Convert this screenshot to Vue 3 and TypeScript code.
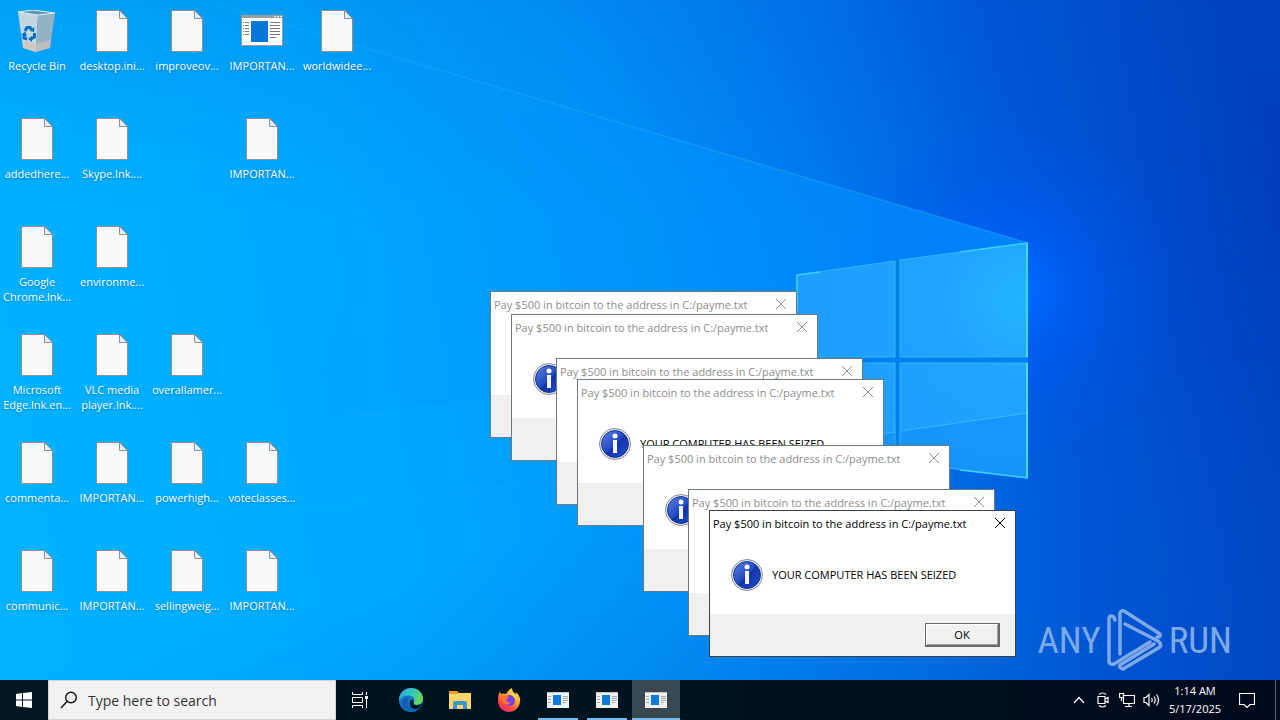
<script setup lang="ts">
import { ref } from 'vue'

type IconKind = 'bin' | 'file' | 'app'
interface DesktopIcon { label: string; kind: IconKind; col: number; row: number }
interface Dialog { id: number; x: number; y: number }

const file = (label: string, col: number, row: number): DesktopIcon => ({ label, kind: 'file', col, row })

const icons: DesktopIcon[] = [
  { label: 'Recycle Bin', kind: 'bin', col: 1, row: 1 },
  file('desktop.ini...', 2, 1),
  file('improveov...', 3, 1),
  { label: 'IMPORTAN...', kind: 'app', col: 4, row: 1 },
  file('worldwidee...', 5, 1),
  file('addedhere...', 1, 2),
  file('Skype.lnk....', 2, 2),
  file('IMPORTAN...', 4, 2),
  file('Google\nChrome.lnk...', 1, 3),
  file('environme...', 2, 3),
  file('Microsoft\nEdge.lnk.en...', 1, 4),
  file('VLC media\nplayer.lnk....', 2, 4),
  file('overallamer...', 3, 4),
  file('commenta...', 1, 5),
  file('IMPORTAN...', 2, 5),
  file('powerhigh...', 3, 5),
  file('voteclasses...', 4, 5),
  file('communic...', 1, 6),
  file('IMPORTAN...', 2, 6),
  file('sellingweig...', 3, 6),
  file('IMPORTAN...', 4, 6),
]

const dialogs = ref<Dialog[]>([
  { id: 1, x: 490, y: 291 },
  { id: 2, x: 511, y: 314 },
  { id: 3, x: 556, y: 358 },
  { id: 4, x: 577, y: 379 },
  { id: 5, x: 643, y: 445 },
  { id: 6, x: 688, y: 489 },
  { id: 7, x: 709, y: 510 },
])
const search = ref('')
const close = (id: number) => {
  dialogs.value = dialogs.value.filter((d) => d.id !== id)
}
</script>

<template>
  <div class="screen">
    <svg class="wallpaper" viewBox="0 0 1280 720" preserveAspectRatio="xMidYMid slice" aria-hidden="true">
      <defs>
        <linearGradient id="base" gradientUnits="userSpaceOnUse" x1="0" y1="420" x2="1280" y2="180">
          <stop offset="0" stop-color="#00b2ff" />
          <stop offset=".28" stop-color="#00a9ff" />
          <stop offset=".5" stop-color="#0094fb" />
          <stop offset=".66" stop-color="#0078ee" />
          <stop offset=".8" stop-color="#0059da" />
          <stop offset="1" stop-color="#003dbd" />
        </linearGradient>
        <linearGradient id="topShade" x1="0" y1="0" x2="0" y2="1">
          <stop offset="0" stop-color="#004fc0" stop-opacity=".16" />
          <stop offset="1" stop-color="#004fc0" stop-opacity="0" />
        </linearGradient>
        <linearGradient id="bottomShade" x1="0" y1="0" x2="1" y2="1">
          <stop offset=".45" stop-color="#0058c8" stop-opacity="0" />
          <stop offset="1" stop-color="#0048c0" stop-opacity=".45" />
        </linearGradient>
        <radialGradient id="glow" gradientUnits="userSpaceOnUse" cx="1010" cy="290" r="170">
          <stop offset="0" stop-color="#0074ff" stop-opacity="1" />
          <stop offset=".35" stop-color="#0060ff" stop-opacity=".55" />
          <stop offset="1" stop-color="#0050f0" stop-opacity="0" />
        </radialGradient>
        <linearGradient id="beam" gradientUnits="userSpaceOnUse" x1="200" y1="0" x2="1028" y2="243">
          <stop offset="0" stop-color="#0098ff" stop-opacity="0" />
          <stop offset=".6" stop-color="#0096ff" stop-opacity=".4" />
          <stop offset="1" stop-color="#008cff" stop-opacity=".8" />
        </linearGradient>
        <linearGradient id="edge" gradientUnits="userSpaceOnUse" x1="200" y1="0" x2="1028" y2="243">
          <stop offset="0" stop-color="#3cbcff" stop-opacity=".15" />
          <stop offset="1" stop-color="#3cb0ff" stop-opacity=".4" />
        </linearGradient>
        <radialGradient id="pane" gradientUnits="userSpaceOnUse" cx="1020" cy="300" r="200">
          <stop offset="0" stop-color="#22b4ff" />
          <stop offset=".4" stop-color="#20a4ff" />
          <stop offset="1" stop-color="#1e9eff" />
        </radialGradient>
      </defs>
      <rect width="1280" height="720" fill="url(#base)" />
      <rect width="1280" height="220" fill="url(#topShade)" />
      <rect y="360" width="1280" height="360" fill="url(#bottomShade)" />
      <rect x="800" y="80" width="440" height="420" fill="url(#glow)" />
      <path d="M200 0L1028 243V300L797 360L300 420Z" fill="url(#beam)" />
      <path d="M215 4L1028 243" stroke="url(#edge)" stroke-width="1.5" />
      <path d="M200 522L797 452" stroke="#5cc8ff" stroke-opacity=".12" />
      <path d="M797 275L1028 243V478L797 448Z" fill="#0080ec" />
      <g fill="url(#pane)">
        <path d="M797 275L895 261V357H797Z" />
        <path d="M900 260L1028 243V357H900Z" />
        <path d="M797 363H895V461L797 448Z" />
        <path d="M900 363H1028V478L900 462Z" />
      </g>
      <path d="M797 445L895 432V461L797 448ZM900 431L1028 413V478L900 462Z" fill="#0a82ee" fill-opacity=".35" />
      <path d="M797 445L895 432M900 431L1028 413" stroke="#36b8ff" />
      <path d="M797 357V275L895 261V357ZM900 357V260L1028 243M900 357H1028M797 363H895V461M900 462V363H1028M900 462L1028 478" fill="none" stroke="#35b4ff" />
      <path d="M1027 244V357M1027 363V478" stroke="#41dcff" stroke-width="2" />
      <path d="M797 275L820 272M797 275V310M960 252L1028 243M960 470L1028 478" stroke="#3ad0ff" fill="none" stroke-width="1.5" />
    </svg>

    <main class="desktop">
      <div class="icon-grid">
        <button
          v-for="(icon, i) in icons"
          :key="i"
          class="desktop-icon"
          :style="{ gridColumn: icon.col, gridRow: icon.row }"
        >
          <svg v-if="icon.kind === 'file'" width="32" height="42" viewBox="0 0 32 42" aria-hidden="true">
            <path d="M.5.5H24L31.500 8.500V41.500H.5Z" fill="#f8f9fa" stroke="#8f8e90" />
            <path d="M23.500 .5V8.500H31.500Z" fill="#dfeefa" stroke="#8f8e90" />
          </svg>
          <svg v-else-if="icon.kind === 'app'" width="42" height="42" viewBox="0 0 42 42" aria-hidden="true">
            <rect x=".5" y="5.500" width="41" height="30" fill="#fff" stroke="#9a9a9c" />
            <rect x="0" y="5" width="42" height="3" fill="#9a9c9f" />
            <path d="M33 6.500h2M36 6.500h2M39 6.500h2" stroke="#e8e8e8" />
            <rect x="10" y="11" width="17" height="21" fill="#0877d8" />
            <path d="M2 12.500h6M2 15.500h6M2 18.500h6M2 21.500h6M2 24.500h6M29 12.500h10M29 15.500h10M29 18.500h10M29 21.500h10M29 24.500h10M29 27.500h6" stroke="#777b80" />
            <path d="M3.500 12v14" stroke="#fff" />
          </svg>
          <svg v-else width="42" height="42" viewBox="0 0 42 42" aria-hidden="true">
            <path d="M2 2L22 5L20 42L7 38Z" fill="#c3d5de" />
            <path d="M22 5L39 3L34 38L20 42Z" fill="#93b2c3" />
            <path d="M6 31L20 34L35 30L34 38L20 42L7 38Z" fill="#d6c1b8" fill-opacity=".65" />
            <path d="M2 2L17 0L39 3L22 5Z" fill="#5e97b8" stroke="#e0f1f9" />
            <g fill="none" stroke="#0a70c4" stroke-width="3">
              <path d="M9 21L11 17.500H14L16 20" />
              <path d="M18.500 23V27L15 29" />
              <path d="M11 29L8 28V25" />
            </g>
            <path d="M14 21L18 22L18.500 17ZM16 26V32L12 29ZM5 25L9 21.500L11 26Z" fill="#0a70c4" />
          </svg>
          <span class="icon-label">{{ icon.label }}</span>
        </button>
      </div>

      <div class="watermark" role="img" aria-label="ANY RUN">
        <span>ANY</span>
        <svg width="58" height="64" viewBox="0 0 58 64" fill="none" stroke="#7fa9e6" stroke-width="3.500" stroke-linejoin="round" stroke-linecap="round" aria-hidden="true">
          <path d="M9 12Q8 8 5 8Q3 8 3 12V54Q4 57 8 56L44 34" />
          <path d="M14 46V5Q15 2 18 3L54 26Q55 29 51 29" />
          <path d="M19 16L52 33Q56 36 54 39L17 61Q13 60 14 57L48 36" />
        </svg>
        <span>RUN</span>
      </div>

      <section
        v-for="(d, i) in dialogs"
        :key="d.id"
        class="dialog"
        :class="{ active: i === dialogs.length - 1 }"
        :style="{ left: d.x + 'px', top: d.y + 'px' }"
        role="dialog"
      >
        <header class="dialog-title">
          <span>Pay $500 in bitcoin to the address in C:/payme.txt</span>
          <button class="dialog-close" aria-label="Close" @click="close(d.id)">
            <svg width="12" height="12" viewBox="0 0 12 12" aria-hidden="true">
              <path d="M1 1L11 11M11 1L1 11" stroke="currentColor" />
            </svg>
          </button>
        </header>
        <div class="dialog-body">
          <svg width="32" height="32" viewBox="0 0 32 32" aria-hidden="true">
            <defs>
              <linearGradient :id="'info' + d.id" x1="0" y1="0" x2="1" y2="1">
                <stop offset="0" stop-color="#5f86e0" />
                <stop offset=".5" stop-color="#2048c4" />
                <stop offset=".52" stop-color="#1233a8" />
                <stop offset="1" stop-color="#2450d0" />
              </linearGradient>
            </defs>
            <circle cx="16" cy="16" r="15.500" fill="#eef0f4" stroke="#858b98" />
            <circle cx="16" cy="16" r="13.500" :fill="`url(#info${d.id})`" stroke="#1a3590" />
            <circle cx="16" cy="8" r="2.500" fill="#fff" />
            <rect x="14" y="12" width="4" height="13" fill="#f4f6fb" />
          </svg>
          <p>YOUR COMPUTER HAS BEEN SEIZED</p>
        </div>
        <footer class="dialog-footer">
          <button class="ok" @click="close(d.id)">OK</button>
        </footer>
      </section>
    </main>

    <nav class="taskbar">
      <button class="start" aria-label="Start">
        <svg width="16" height="16" viewBox="0 0 16 16" fill="#fff" aria-hidden="true">
          <path d="M0 2L6 1V7.500H0ZM7 1L16 0V7.500H7ZM0 8.500H6V15L0 14ZM7 8.500H16V16L7 15Z" />
        </svg>
      </button>
      <label class="search">
        <svg width="18" height="18" viewBox="0 0 18 18" fill="none" stroke="#111" stroke-width="1.400" aria-hidden="true">
          <circle cx="11" cy="6.500" r="5.300" />
          <path d="M7 10.500L1 17" />
        </svg>
        <input v-model="search" type="text" placeholder="Type here to search" aria-label="Search" />
      </label>
      <button class="start" aria-label="Task view">
        <svg width="18" height="16" viewBox="0 0 18 16" fill="none" stroke="#fff" aria-hidden="true">
          <path d="M1.500 0V2.500H11.500V0M1.500 16V13.500H11.500V16M1.500 5.500H11.500V10.500H1.500ZM15.500 0V3M15.500 7V16" />
          <path d="M14 4h3v3h-3z" fill="#fff" stroke="none" />
        </svg>
      </button>

      <div class="apps">
        <button class="app" aria-label="Microsoft Edge">
          <svg width="24" height="24" viewBox="0 0 24 24" aria-hidden="true">
            <defs>
              <linearGradient id="edgeTop" x1="0" y1="0" x2="1" y2=".4">
                <stop offset="0" stop-color="#2aa5e0" />
                <stop offset=".6" stop-color="#35c8b8" />
                <stop offset="1" stop-color="#63d655" />
              </linearGradient>
            </defs>
            <circle cx="12" cy="12" r="12" fill="#1577cf" />
            <path d="M0 11C1 4 6 0 12 0C19 0 24 5 24 10.500C24 14.500 21 17 17.500 17C15 17 14 16 14.500 15C17 11 14 7.500 9.500 7.500C5 7.500 1.500 9.500 0 13Z" fill="url(#edgeTop)" />
            <path d="M9 11C7.500 15 10 21 16 22C10 25 3 21 3 15C3 11.500 6 9 9.500 9Z" fill="#1160b4" />
            <path d="M14.500 15C14 16 15 17 17.500 17C20 17 22 16 23 15C23 17 21 20 18 21.500C12 22 9.500 17 11 13C12 11 14 11 14.800 12.500Z" fill="#082c50" />
            <path d="M12 13C10.500 17 13 21 18 20.500C20.500 19.500 22 18 22.500 16.500C20 18 13.500 18 14.500 15Z" fill="#001620" />
          </svg>
        </button>
        <button class="app" aria-label="File Explorer">
          <svg width="22" height="20" viewBox="0 0 22 20" aria-hidden="true">
            <path d="M0 1H8L10 3H21V6H0Z" fill="#e8a21d" />
            <path d="M0 4H8L10 3H22V19H0Z" fill="#ffd667" />
            <path d="M4 19V13Q4 11 6 11H16Q18 11 18 13V19H14V15H8V19Z" fill="#3b93d6" />
          </svg>
        </button>
        <button class="app" aria-label="Firefox">
          <svg width="24" height="24" viewBox="0 0 24 24" aria-hidden="true">
            <defs>
              <linearGradient id="fox" x1=".8" y1="0" x2=".2" y2="1">
                <stop offset="0" stop-color="#fff04a" />
                <stop offset=".45" stop-color="#ff9a28" />
                <stop offset=".75" stop-color="#ff4046" />
                <stop offset="1" stop-color="#e5227c" />
              </linearGradient>
            </defs>
            <path d="M3 3Q3 5 4 6Q6 5 9 6Q11 2 15 0Q15 4 19 6Q19 5 18.500 4Q24 8 23 14C22 20 17.500 24 12 24C5.500 24 1 19 1 12.500C1 9 1.500 6 3 3Z" fill="url(#fox)" />
            <circle cx="12.500" cy="12.500" r="5.500" fill="#7542e5" />
            <path d="M4 8Q8 6 12 9L9 12Q10 15 14 14Q10 19 6 15Q4 12 4 8Z" fill="#ff7139" />
            <path d="M15 4Q20 7 20 13L17 9Q14 7 15 4Z" fill="#ffd940" />
          </svg>
        </button>
        <button v-for="n in 3" :key="n" class="app running" :class="{ current: n === 3 }" aria-label="Message window">
          <svg width="22" height="16" viewBox="0 0 22 16" aria-hidden="true">
            <rect width="22" height="16" fill="#eff0f1" />
            <path d="M0 .5H22" stroke="#c1c4c6" />
            <rect x="6" y="3" width="8" height="10" fill="#0d7bdc" />
            <path d="M1 4.500h3M1 7.500h3M1 10.500h3M16 4.500h5M16 6.500h5M16 8.500h5M16 10.500h3" stroke="#a4a7aa" />
          </svg>
        </button>
      </div>

      <div class="tray">
        <button class="tray-icon" aria-label="Show hidden icons">
          <svg width="12" height="8" viewBox="0 0 12 8"><path d="M1 7L6 1.500L11 7" /></svg>
        </button>
        <button class="tray-icon" aria-label="Meet Now">
          <svg width="12" height="16" viewBox="0 0 12 16">
            <path d="M1 4.500H8V11.500H1ZM8 7L11 5.500V10.500L8 9M2 2.500Q5.500 -.5 9 2.500M2 13.500Q5.500 16.500 9 13.500" />
          </svg>
        </button>
        <button class="tray-icon" aria-label="Network">
          <svg width="16" height="14" viewBox="0 0 16 14">
            <path d="M5 2.500H15.500V10.500H4.500V5M.5 .5H4.500V4.500H.5ZM2.500 4.500V8M10 10.500V13M6 13.500H13" />
          </svg>
        </button>
        <button class="tray-icon" aria-label="Volume">
          <svg width="17" height="14" viewBox="0 0 17 14">
            <path d="M1 4.500H3L6 1.500V12.500L3 9.500H1ZM8.500 5Q10 7 8.500 9M11 3.500Q13.500 7 11 10.500M13.500 1.500Q17.500 7 13.500 12.500" />
          </svg>
        </button>
        <button class="clock"><span>1:14 AM</span><span>5/17/2025</span></button>
        <button class="notify" aria-label="Notifications">
          <svg width="16" height="16" viewBox="0 0 16 16"><path d="M.5 1.500H15.500V12.500H11L8 15.500L5 12.500H.5Z" /></svg>
        </button>
        <button class="show-desktop" aria-label="Show desktop"></button>
      </div>
    </nav>
  </div>
</template>

<style>
body {
  margin: 0;
}
</style>

<style scoped>
.screen {
  position: relative;
  display: flex;
  flex-direction: column;
  min-height: 100vh;
  overflow: hidden;
  background: #0090fa;
  font-family: "Open Sans", "Noto Sans", sans-serif;
  font-size: 11px;
}
button {
  padding: 0;
  border: 0;
  background: none;
  color: inherit;
  font: inherit;
}
.wallpaper {
  position: absolute;
  inset: 0;
  width: 100%;
  height: 100%;
}
.desktop {
  position: relative;
  flex: 1;
}
.icon-grid {
  display: grid;
  grid-template-columns: repeat(5, 74px);
  grid-auto-rows: 108px;
  column-gap: 1px;
}
.desktop-icon {
  display: flex;
  flex-direction: column;
  align-items: center;
  gap: 6px;
  padding-top: 10px;
  color: #fff;
}
.desktop-icon svg {
  flex: none;
}
.icon-label {
  line-height: 15px;
  text-align: center;
  white-space: pre;
  text-shadow: 0 1px 2px rgba(0, 40, 90, 0.4);
}
.watermark {
  position: absolute;
  right: 48px;
  bottom: 8px;
  display: flex;
  align-items: center;
  gap: 5px;
  color: #7fa9e6;
  font-family: "Roboto Condensed", "Liberation Sans Narrow", "Liberation Sans", sans-serif;
  font-size: 37px;
}
.dialog {
  position: absolute;
  display: flex;
  flex-direction: column;
  box-sizing: border-box;
  width: 307px;
  border: 1px solid #6b7783;
  background: #fff;
  color: #000;
}
.dialog.active {
  border-color: #3a4048;
}
.dialog-title {
  display: flex;
  align-items: center;
  justify-content: space-between;
  height: 24px;
  padding: 0 9px 0 3px;
  color: #8d8d8d;
  white-space: nowrap;
}
.active .dialog-title {
  color: #000;
}
.dialog-close {
  display: flex;
}
.dialog-body {
  display: flex;
  align-items: center;
  gap: 9px;
  height: 79px;
  padding-left: 21px;
}
.dialog-body p {
  margin: 0;
  white-space: nowrap;
}
.dialog-footer {
  display: flex;
  align-items: center;
  justify-content: flex-end;
  height: 42px;
  padding-right: 15px;
  background: #f0f0f0;
}
.ok {
  width: 75px;
  height: 24px;
  border: 1px solid #696969;
  border-right-width: 2px;
  border-bottom-width: 2px;
  box-shadow: inset 1px 1px #fff, inset -1px -1px #a0a0a0;
}
.taskbar {
  position: relative;
  display: flex;
  height: 40px;
  background: linear-gradient(90deg, #001722, #00121f 60%, #020a1d);
  color: #fff;
}
.start,
.app {
  display: flex;
  align-items: center;
  justify-content: center;
  width: 48px;
}
.search {
  display: flex;
  align-items: center;
  gap: 10px;
  box-sizing: border-box;
  width: 288px;
  padding: 0 11px;
  border: 1px solid #d4d4d4;
  background: #f2f2f2;
}
.search input {
  flex: 1;
  min-width: 0;
  padding: 0;
  border: 0;
  outline: 0;
  background: none;
  color: #222;
  font: inherit;
  font-size: 14px;
}
.search input::placeholder {
  color: #333;
  opacity: 1;
}
.apps {
  display: flex;
  gap: 1px;
  margin-left: 3px;
}
.running {
  background: linear-gradient(#76b9ed, #76b9ed) bottom / 40px 2px no-repeat;
}
.current {
  background: linear-gradient(#76b9ed, #76b9ed) bottom / 100% 2px no-repeat #384750;
}
.tray {
  display: flex;
  margin-left: auto;
}
.tray svg {
  fill: none;
  stroke: #fff;
  stroke-width: 1.2px;
}
.tray-icon {
  display: flex;
  align-items: center;
  justify-content: center;
  width: 24px;
}
.clock {
  display: flex;
  flex-direction: column;
  align-items: center;
  justify-content: center;
  width: 64px;
  line-height: 18px;
}
.notify {
  display: flex;
  align-items: center;
  justify-content: center;
  width: 40px;
}
.show-desktop {
  width: 5px;
  margin-left: 8px;
  border-left: 1px solid #5a6270;
}
</style>
